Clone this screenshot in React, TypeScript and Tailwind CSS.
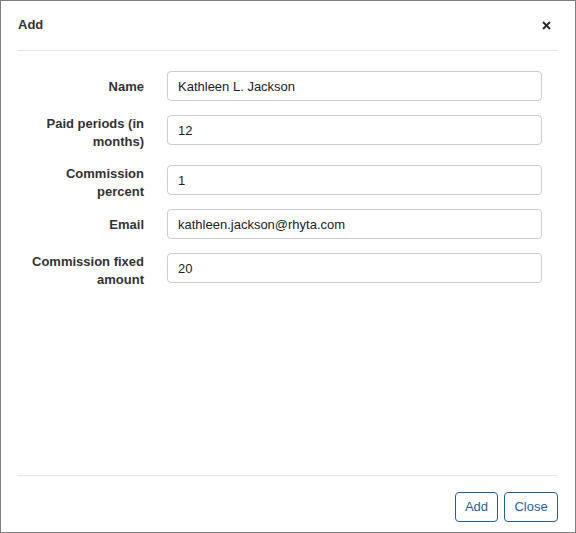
import React from "react";

type Field = {
  label: string;
  value: string;
  rowClass: string;
  labelClass: string;
};

const fields: Field[] = [
  { label: "Name", value: "Kathleen L. Jackson", rowClass: "h-[30px]", labelClass: "pt-[7px]" },
  { label: "Paid periods (in months)", value: "12", rowClass: "h-[36px]", labelClass: "pt-0" },
  { label: "Commission percent", value: "1", rowClass: "h-[30px]", labelClass: "pt-0" },
  { label: "Email", value: "kathleen.jackson@rhyta.com", rowClass: "h-[30px]", labelClass: "pt-[7px]" },
  { label: "Commission fixed amount", value: "20", rowClass: "h-[30px]", labelClass: "pt-0" },
];

function FieldRow({ field }: { field: Field }) {
  return (
    <div className={`flex items-start ${field.rowClass}`}>
      <label className={`w-[127px] shrink-0 text-right text-[13px] leading-[18px] font-bold text-[#333] ${field.labelClass}`}>
        {field.label}
      </label>
      <input
        readOnly
        value={field.value}
        className="ml-[23px] h-[30px] w-[375px] rounded-[4px] border border-[#ccc] bg-white px-[10px] text-[13px] text-[#222] outline-none"
      />
    </div>
  );
}

export default function App() {
  return (
    <div
      className="flex h-[533px] w-[576px] flex-col border border-[#7f7f7f] bg-white"
      style={{ fontFamily: '"Liberation Sans", Arial, sans-serif' }}
    >
      {/* Header */}
      <div className="ml-4 mr-[17px] flex h-[50px] items-center justify-between border-b border-[#e5e5e5]">
        <h4 className="pl-px pb-[1px] text-[13px] font-bold text-[#333]">Add</h4>
        <button className="mr-[7px] pb-[1px] text-[#333]">
          <svg width="9" height="9" viewBox="0 0 9 9">
            <path d="M1 1 L8 8 M8 1 L1 8" stroke="#2b2f3a" strokeWidth="2" />
          </svg>
        </button>
      </div>

      {/* Body */}
      <div className="mx-4 flex flex-1 flex-col gap-[14px] pt-[20px]">
        {fields.map((f) => (
          <FieldRow key={f.label} field={f} />
        ))}
      </div>

      {/* Footer */}
      <div className="ml-4 mr-[17px] flex h-[57px] items-start justify-end gap-[6px] border-t border-[#e5e5e5] pt-[16px]">
        <button className="h-[30px] w-[43px] rounded-[4px] border border-[#1f5f9c] text-[13px] text-[#1f5f9c]">
          Add
        </button>
        <button className="h-[30px] w-[54px] rounded-[4px] border border-[#1f5f9c] text-[13px] text-[#1f5f9c]">
          Close
        </button>
      </div>
    </div>
  );
}
